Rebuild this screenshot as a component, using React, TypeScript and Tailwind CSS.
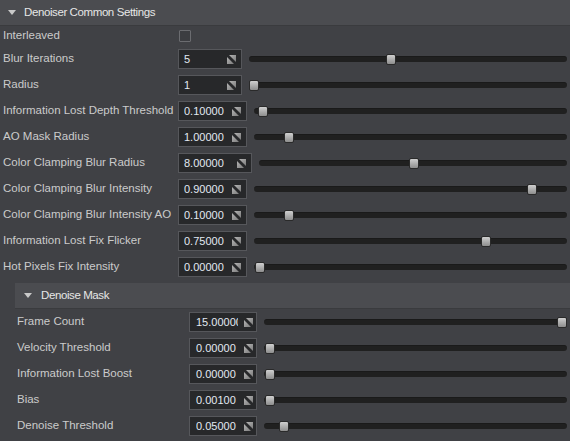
import React from "react";

type Row = { label: string; value: string; boxW: number; offset: number | "end" };

const mainRows: Row[] = [
  { label: "Blur Iterations", value: "5", boxW: 64, offset: 137 },
  { label: "Radius", value: "1", boxW: 64, offset: 0 },
  { label: "Information Lost Depth Threshold", value: "0.10000", boxW: 69, offset: 4 },
  { label: "AO Mask Radius", value: "1.00000", boxW: 69, offset: 30 },
  { label: "Color Clamping Blur Radius", value: "8.00000", boxW: 74, offset: 150 },
  { label: "Color Clamping Blur Intensity", value: "0.90000", boxW: 69, offset: 273 },
  { label: "Color Clamping Blur Intensity AO", value: "0.10000", boxW: 69, offset: 30 },
  { label: "Information Lost Fix Flicker", value: "0.75000", boxW: 69, offset: 227 },
  { label: "Hot Pixels Fix Intensity", value: "0.00000", boxW: 69, offset: 1 },
];

const maskRows: Row[] = [
  { label: "Frame Count", value: "15.00000", boxW: 68, offset: "end" },
  { label: "Velocity Threshold", value: "0.00000", boxW: 68, offset: 1 },
  { label: "Information Lost Boost", value: "0.00000", boxW: 68, offset: 1 },
  { label: "Bias", value: "0.00100", boxW: 68, offset: 1 },
  { label: "Denoise Threshold", value: "0.05000", boxW: 68, offset: 15 },
];

function ResizeIcon() {
  return (
    <svg width="9" height="9" viewBox="0 0 9 9" className="shrink-0">
      <defs>
        <linearGradient id="rg" x1="0" y1="0" x2="1" y2="1">
          <stop offset="0" stopColor="#b4b4b4" />
          <stop offset="1" stopColor="#7c7c7c" />
        </linearGradient>
      </defs>
      <polygon points="2,0 9,0 9,7" fill="url(#rg)" />
      <polygon points="0,2 0,9 7,9" fill="url(#rg)" />
    </svg>
  );
}

function Triangle() {
  return (
    <svg width="8" height="5" viewBox="0 0 8 5" className="shrink-0">
      <polygon points="0,0 8,0 4,5" fill="#c9c9c9" />
    </svg>
  );
}

function Slider({ offset }: { offset: number | "end" }) {
  return (
    <div className="relative flex-1 h-[11px] mr-[3px] flex items-center">
      <div className="w-full h-[6px] rounded-[3px] bg-[#202020] border-t border-[#1a1a1a]" />
      <div
        className="absolute top-0 w-[10px] h-[11px] rounded-[2px] border border-[#2a2a2a] bg-gradient-to-b from-[#cfcfcf] to-[#8e8e8e]"
        style={offset === "end" ? { right: 0 } : { left: offset }}
      />
    </div>
  );
}

function ValueBox({ value, w, nested }: { value: string; w: number; nested: boolean }) {
  return (
    <div
      className={
        "h-[20px] shrink-0 flex items-center bg-[#27282a] border border-[#56575b] " +
        (nested ? "pl-[6px] pr-[3px]" : "pl-[5px] pr-[5px]")
      }
      style={{ width: w }}
    >
      <span className="flex-1 overflow-hidden whitespace-nowrap text-[11px] text-[#e2e8f2] leading-none">
        {value}
      </span>
      <span className={nested ? "ml-[6px]" : "ml-[4px]"}>
        <ResizeIcon />
      </span>
    </div>
  );
}

function SettingRow({ row, nested }: { row: Row; nested: boolean }) {
  return (
    <div className="h-[26px] flex items-center">
      <div
        className={
          "shrink-0 text-[11.5px] text-[#cbcbcb] whitespace-nowrap " +
          (nested ? "w-[172px]" : "w-[175px]")
        }
      >
        {row.label}
      </div>
      <ValueBox value={row.value} w={row.boxW} nested={nested} />
      <div className="flex-1 flex items-center pl-[7px]">
        <Slider offset={row.offset} />
      </div>
    </div>
  );
}

export default function App() {
  return (
    <div
      className="w-[570px] h-[441px] bg-[#404145] overflow-hidden"
      style={{ fontFamily: '"Liberation Sans", Arial, sans-serif' }}
    >
      <div className="h-[26px] bg-[#4b4c50] border-b border-[#3a3b3e] flex items-center pl-[8px] gap-[8px]">
        <Triangle />
        <span className="text-[11.5px] tracking-[-0.4px] text-[#e6e6e6]">Denoiser Common Settings</span>
      </div>
      <div className="pl-[3px]">
        <div className="h-[20px] flex items-center">
          <div className="w-[176px] shrink-0 text-[11.5px] text-[#cbcbcb]">Interleaved</div>
          <div className="w-[12px] h-[12px] border border-[#6b6c70] bg-[#3c3d41] rounded-[1px]" />
        </div>
        {mainRows.map((r) => (
          <SettingRow key={r.label} row={r} nested={false} />
        ))}
      </div>
      <div className="mt-[3px] ml-[15px] h-[26px] bg-[#4b4c50] border-b border-[#3a3b3e] flex items-center pl-[9px] gap-[9px]">
        <Triangle />
        <span className="text-[11.5px] tracking-[-0.4px] text-[#e6e6e6]">Denoise Mask</span>
      </div>
      <div className="pl-[17px]">
        {maskRows.map((r) => (
          <SettingRow key={r.label} row={r} nested={true} />
        ))}
      </div>
    </div>
  );
}
